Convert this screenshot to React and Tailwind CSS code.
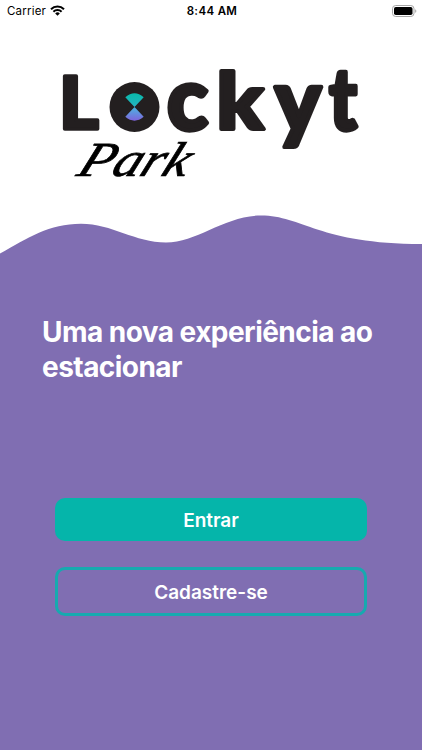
import { clsx } from "clsx";

// position, size and stretch for each letter of the wordmark
const LETTERS = [
  { char: "L", x: 59, y: 129, sx: 0.95, sy: 0.9 },
  { char: "c", x: 167, y: 129.5, sx: 1.06, sy: 1.09 },
  { char: "k", x: 216.5, y: 129, sx: 1.08, sy: 0.97 },
  { char: "y", x: 275, y: 132, sx: 1.08, sy: 1.1 },
  { char: "t", x: 329, y: 129.5, sx: 0.93, sy: 1.08 },
];

function WifiIcon() {
  return (
    <svg className="-mt-px h-[11px] w-[15px]" viewBox="0 0 15 11" fill="none">
      <path d="M1 4.2a9.3 9.3 0 0 1 13 0" stroke="#000" strokeWidth="2.1" />
      <path d="M3.4 6.7a5.8 5.8 0 0 1 8.2 0" stroke="#000" strokeWidth="2" />
      <path d="M7.5 10.8 5.2 8.4a3.3 3.3 0 0 1 4.6 0Z" fill="#000" />
    </svg>
  );
}

function BatteryIcon() {
  return (
    <svg className="-mt-px h-3 w-[25px]" viewBox="0 0 25 12" fill="none">
      <rect x="0.5" y="0.5" width="21.5" height="11" rx="3.2" stroke="#a6a6a6" />
      <rect x="2" y="2" width="18.5" height="8" rx="1.8" fill="#000" />
      <path d="M23.2 4.2c1.5.5 1.5 3.1 0 3.6Z" fill="#a6a6a6" />
    </svg>
  );
}

function StatusBar() {
  return (
    <div className="grid h-[22px] grid-cols-3 items-center pr-[5px] pl-[7px] text-[11.5px] text-black">
      <div className="flex items-center gap-1">
        <span className="pt-0.5 tracking-[0.2px]">Carrier</span>
        <WifiIcon />
      </div>
      <span className="pt-px text-center font-semibold tracking-[0.35px]">8:44 AM</span>
      <div className="flex justify-end">
        <BatteryIcon />
      </div>
    </div>
  );
}

function Logo() {
  return (
    <svg className="block h-[178px] w-full" viewBox="0 22 422 178">
      <defs>
        <linearGradient id="mark" x1="0" y1="93" x2="0" y2="121" gradientUnits="userSpaceOnUse">
          <stop offset="0" stopColor="#08b9aa" />
          <stop offset="0.42" stopColor="#20b6bd" />
          <stop offset="0.6" stopColor="#55a5e0" />
          <stop offset="1" stopColor="#8061dc" />
        </linearGradient>
      </defs>
      <g
        className="font-['Lato',sans-serif] font-black"
        fill="#231f20"
        stroke="#231f20"
        strokeWidth="4"
        strokeLinejoin="round"
        fontSize="80"
      >
        {LETTERS.map(({ char, x, y, sx, sy }) => (
          <text key={char} transform={`translate(${x} ${y}) scale(${sx} ${sy})`}>
            {char}
          </text>
        ))}
      </g>
      <circle cx="134.5" cy="107" r="25" fill="#231f20" />
      <path
        d="M134.5 107 125.300 97.200Q134.500 89.500 143.700 97.200ZM134.500 107 125.300 116.800Q134.500 124.500 143.700 116.800Z"
        fill="url(#mark)"
      />
      <text
        className="font-['Liberation_Serif',serif] italic"
        transform="translate(75 176) scale(1.15 1) skewX(-20)"
        fontSize="49"
        stroke="#000"
        strokeWidth="0.7"
      >
        Park
      </text>
    </svg>
  );
}

function Wave() {
  return (
    <svg className="block h-[60px] w-full" viewBox="0 200 422 60">
      <path
        d="M0 253.5C28 238 49 223.7 81 223.7C112 223.7 135 242.5 166 242.5C197 242.5 225 215.5 261 215.5C302 215.5 319 244 422 244V260H0Z"
        fill="#806eb2"
      />
    </svg>
  );
}

function Button({ outline, children }) {
  return (
    <button
      className={clsx(
        "w-full rounded-[10px] pt-[3px] text-[19px] font-semibold text-white",
        outline ? "h-[49px] border-3 border-[#16aaaf]" : "h-[43px] bg-[#05b5aa]"
      )}
    >
      {children}
    </button>
  );
}

export default function App() {
  return (
    <main className="flex h-[750px] w-[422px] flex-col overflow-hidden bg-white font-['Inter',sans-serif]">
      <StatusBar />
      <Logo />
      <Wave />
      <section className="flex-1 bg-[#806eb2]">
        <h1 className="mt-[55px] ml-[42px] text-[28px] leading-[35px] font-bold tracking-[-0.54px] whitespace-nowrap text-white">
          Uma nova experiência ao
          <br />
          estacionar
        </h1>
        <div className="mt-[113px] flex flex-col gap-[26px] px-[55px]">
          <Button>Entrar</Button>
          <Button outline>Cadastre-se</Button>
        </div>
      </section>
    </main>
  );
}
